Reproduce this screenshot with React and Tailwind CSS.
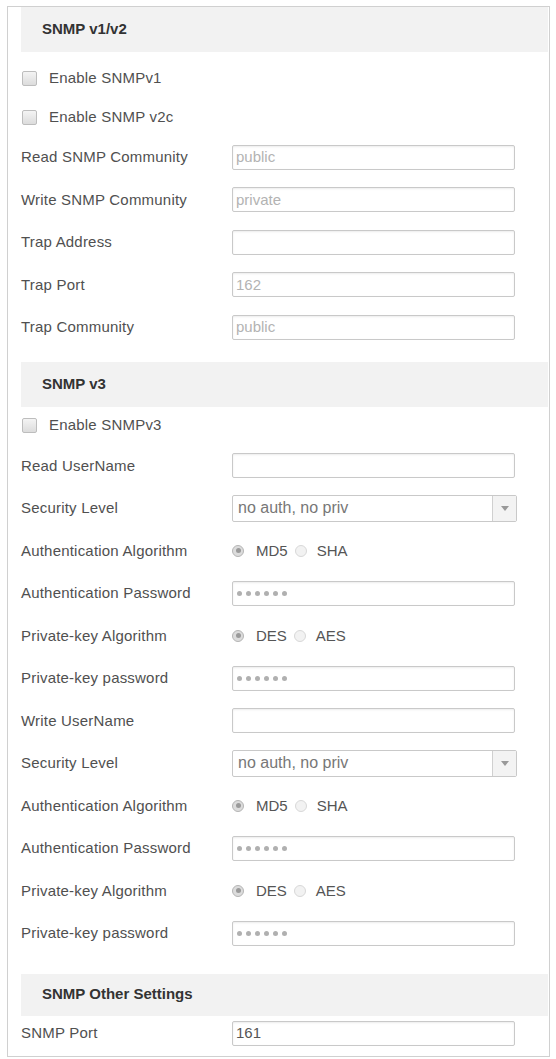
import React from 'react';

const labelCls = 'w-[211px] shrink-0 text-[15px] tracking-[0.2px] text-[#505050]';
const boxCls = 'flex h-[25px] w-[283px] items-center rounded-[2px] border border-[#c9c9c9] bg-white px-[3px] text-[15px] shadow-[inset_0_1px_2px_rgba(0,0,0,0.08)]';

const Header = ({ title, className = '' }) => (
    <div className={`flex items-center bg-[#f2f2f2] pl-[21px] text-[15px] font-bold text-[#333] ${className}`}>
        {title}
    </div>
);

const Checkbox = ({ label, className = '' }) => (
    <div className={`flex items-center ${className}`}>
        <span className="ml-px h-[15px] w-[15px] rounded-[2px] border border-[#bdbdbd] bg-gradient-to-b from-[#f4f4f4] to-[#dcdcdc]" />
        <span className="ml-[12px] text-[15px] tracking-[0.2px] text-[#505050]">{label}</span>
    </div>
);

const Row = ({ label, children }) => (
    <div className="flex h-[42.5px] items-center">
        <div className={labelCls}>{label}</div>
        {children}
    </div>
);

const TextBox = ({ value = '', dark = false }) => (
    <div className={`${boxCls} ${dark ? 'text-[#555]' : 'text-[#b3b3b3]'}`}>{value}</div>
);

const Dots = () => (
    <div className={boxCls}>
        <span className="flex gap-[4px] pl-px">
            {[...Array(6)].map((_, i) => (
                <span key={i} className="h-[5px] w-[5px] rounded-full bg-[#b0b0b0]" />
            ))}
        </span>
    </div>
);

const Select = () => (
    <div className="flex h-[27px] w-[285px] items-stretch rounded-[2px] border border-[#c9c9c9] bg-white">
        <div className="flex flex-1 items-center pl-[5px] text-[16px] text-[#777]">no auth, no priv</div>
        <div className="flex w-[24px] items-center justify-center border-l border-[#d0d0d0] bg-[#f3f3f3]">
            <svg width="8" height="5" viewBox="0 0 8 5">
                <path d="M0 0h8L4 5z" fill="#999" />
            </svg>
        </div>
    </div>
);

const Radio = ({ checked }) => (
    <span className={`flex h-[12px] w-[12px] items-center justify-center rounded-full border ${checked ? 'border-[#b5b5b5] bg-[#dcdcdc]' : 'border-[#d8d8d8] bg-[#f2f2f2]'}`}>
        {checked && <span className="h-[5px] w-[5px] rounded-full bg-[#9a9a9a]" />}
    </span>
);

const RadioPair = ({ a, b }) => (
    <div className="flex items-center text-[15px] text-[#555]">
        <Radio checked />
        <span className="ml-[12px]">{a}</span>
        <span className="ml-[7px]"><Radio /></span>
        <span className="ml-[10px]">{b}</span>
    </div>
);

const V3User = ({ user }) => (
    <>
        <Row label={user}><TextBox /></Row>
        <Row label="Security Level"><Select /></Row>
        <Row label="Authentication Algorithm"><RadioPair a="MD5" b="SHA" /></Row>
        <Row label="Authentication Password"><Dots /></Row>
        <Row label="Private-key Algorithm"><RadioPair a="DES" b="AES" /></Row>
        <Row label="Private-key password"><Dots /></Row>
    </>
);

export default function App() {
    return (
        <div className="min-h-screen bg-white pl-[7px] pt-[6px] font-['Liberation_Sans',Arial,sans-serif]">
            <div className="w-[543px] border border-[#d0d0d0] pb-[4px] pl-[13px] pr-px">
                {/* SNMP v1/v2 */}
                <Header title="SNMP v1/v2" className="h-[45px]" />
                <Checkbox label="Enable SNMPv1" className="mt-[6px] h-[40px]" />
                <Checkbox label="Enable SNMP v2c" className="h-[38px]" />
                <Row label="Read SNMP Community"><TextBox value="public" /></Row>
                <Row label="Write SNMP Community"><TextBox value="private" /></Row>
                <Row label="Trap Address"><TextBox /></Row>
                <Row label="Trap Port"><TextBox value="162" /></Row>
                <Row label="Trap Community"><TextBox value="public" /></Row>

                {/* SNMP v3 */}
                <Header title="SNMP v3" className="mt-[13px] h-[45px]" />
                <Checkbox label="Enable SNMPv3" className="h-[38px]" />
                <V3User user="Read UserName" />
                <V3User user="Write UserName" />

                {/* Other */}
                <Header title="SNMP Other Settings" className="mt-[19px] h-[42px]" />
                <div className="flex h-[36px] items-center">
                    <div className={labelCls}>SNMP Port</div>
                    <TextBox value="161" dark />
                </div>
            </div>
        </div>
    );
}
